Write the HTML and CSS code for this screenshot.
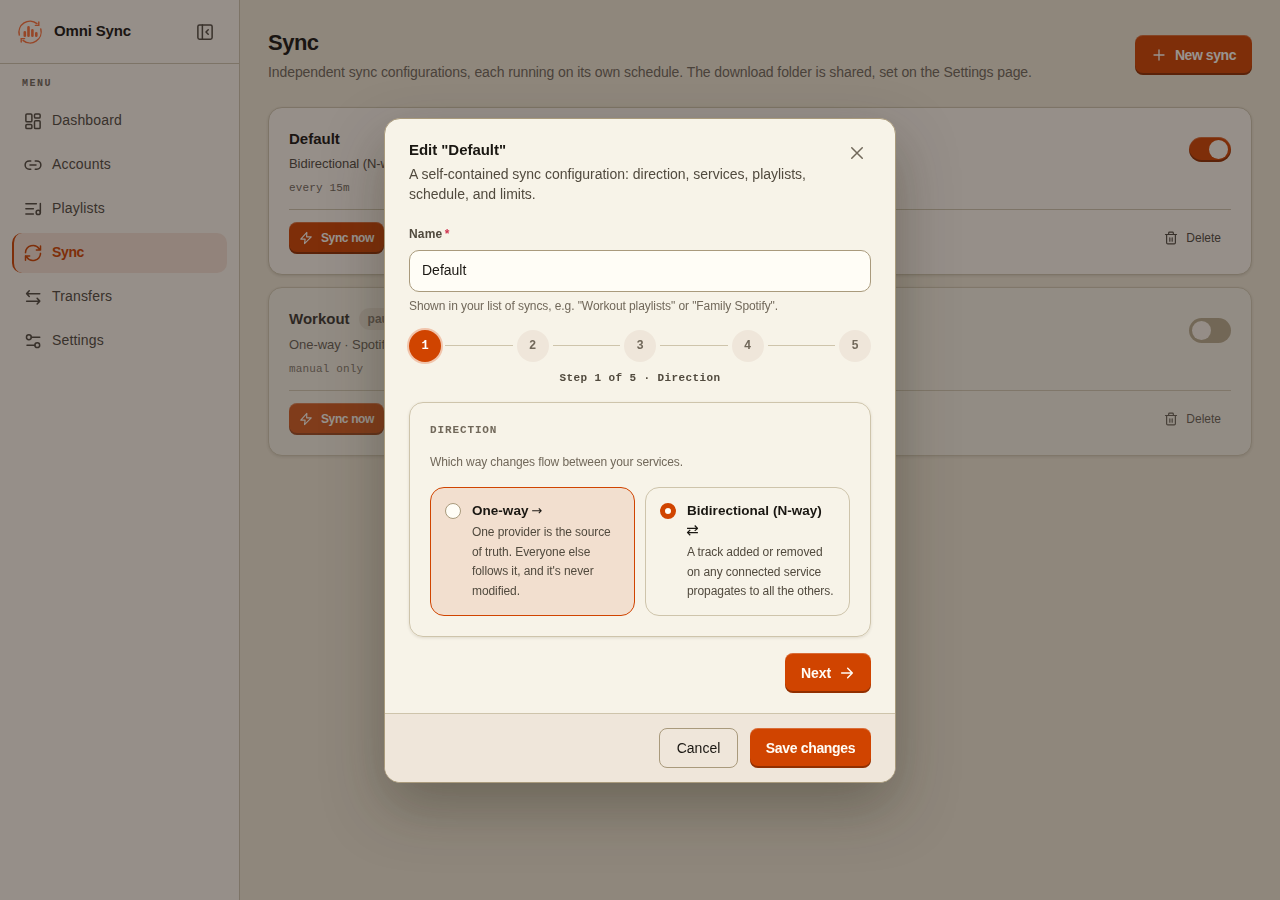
FILE: index.html
```
<!DOCTYPE html>
<html lang="en">
<head>
  <meta charset="UTF-8">
  <meta name="viewport" content="width=device-width, initial-scale=1.0">
  <title>Omni Sync</title>
  <link rel="stylesheet" href="styles.css">
</head>
<body>
  <div class="app">
    <aside class="sidebar">
      <div class="brand">
        <svg class="logo" viewBox="0 0 24 24">
          <path class="ring" d="M1.3 15A11.100 11.100 0 0 1 19 3.600M20.800 2v3.400h-3.400M22.800 9A11.100 11.100 0 0 1 5 20.400M3.200 22v-3.400h3.400"/>
          <path class="bars" d="M6.800 12.200v3.600M10.500 7.400v8.400M14.400 10.300v5.500M18.300 13.300v2.500"/>
        </svg>
        <span class="brand-name">Omni Sync</span>
        <svg class="icon collapse" viewBox="0 0 24 24"><rect x="2.500" y="2.500" width="19" height="19" rx="2.200"/><path d="M8.500 2.500v19M16.300 9l-3 3 3 3"/></svg>
      </div>

      <div class="menu-label">MENU</div>
      <nav>
        <a class="nav-item">
          <svg class="icon" viewBox="0 0 24 24"><rect x="2.500" y="2.500" width="8" height="10.500" rx="1.500"/><rect x="14" y="2.500" width="7.500" height="5.500" rx="1.500"/><rect x="2.500" y="16.500" width="8" height="5.500" rx="1.500"/><rect x="14" y="11.500" width="7.500" height="10.500" rx="1.500"/></svg>
          <span>Dashboard</span>
        </a>
        <a class="nav-item">
          <svg class="icon" viewBox="0 0 24 24"><path d="M9 17.500H7a5.500 5.500 0 0 1 0-11h2M15 6.500h2a5.500 5.500 0 0 1 0 11h-2M8 12h8"/></svg>
          <span>Accounts</span>
        </a>
        <a class="nav-item">
          <svg class="icon" viewBox="0 0 24 24"><path d="M2.500 5h14M2.500 11.800h10M2.500 18.500h10M21.800 4.500v12"/><circle cx="19" cy="16.500" r="2.800"/></svg>
          <span>Playlists</span>
        </a>
        <a class="nav-item active">
          <svg class="icon" viewBox="0 0 24 24"><path d="M2 11.500A10 10 0 0 1 20.300 6.500L22 8M22 2.500V8h-5.500M22 12.500A10 10 0 0 1 3.700 17.500L2 16M2 21.500V16h5.500"/></svg>
          <span>Sync</span>
        </a>
        <a class="nav-item">
          <svg class="icon" viewBox="0 0 24 24"><path d="M21 7.500H3.500M7 3.800L3.500 7.500 7 11.200M3.500 17.500H21M17.500 13.800l3.500 3.700-3.500 3.700"/></svg>
          <span>Transfers</span>
        </a>
        <a class="nav-item">
          <svg class="icon" viewBox="0 0 24 24"><circle cx="6.500" cy="7" r="3.200"/><path d="M9.700 7h11.300M4 17.500h10.500"/><circle cx="17.700" cy="17.500" r="3.200"/></svg>
          <span>Settings</span>
        </a>
      </nav>
    </aside>

    <main class="main">
      <header class="page-header">
        <div>
          <h1>Sync</h1>
          <p class="subtitle">Independent sync configurations, each running on its own schedule. The download folder is shared, set on the Settings page.</p>
        </div>
        <button class="btn btn-primary btn-new">
          <svg class="icon" viewBox="0 0 24 24"><path d="M12 4.500v15M4.500 12h15"/></svg>
          New sync
        </button>
      </header>

      <section class="sync-card">
        <div class="sync-top">
          <div>
            <div class="sync-title"><h2>Default</h2></div>
            <p class="sync-desc">Bidirectional (N-way)</p>
            <p class="sync-schedule">every 15m</p>
          </div>
          <span class="toggle on"></span>
        </div>
        <div class="sync-actions">
          <button class="btn btn-primary btn-small">
            <svg class="icon" viewBox="0 0 24 24"><path d="M13.500 2.500L3 14h7.500l-1 7.500L21 10h-8z"/></svg>
            Sync now
          </button>
          <button class="btn-delete">
            <svg class="icon" viewBox="0 0 24 24"><path d="M2.500 6h19M8 6V3.500Q8 2 9.500 2h5Q16 2 16 3.500V6M4.500 6v14q0 2 2 2h11q2 0 2-2V6M10 11.500v6M14 11.500v6"/></svg>
            Delete
          </button>
        </div>
      </section>

      <section class="sync-card paused">
        <div class="sync-top">
          <div>
            <div class="sync-title"><h2>Workout</h2><span class="badge">paused</span></div>
            <p class="sync-desc">One-way · Spotify</p>
            <p class="sync-schedule">manual only</p>
          </div>
          <span class="toggle"></span>
        </div>
        <div class="sync-actions">
          <button class="btn btn-primary btn-small">
            <svg class="icon" viewBox="0 0 24 24"><path d="M13.500 2.500L3 14h7.500l-1 7.500L21 10h-8z"/></svg>
            Sync now
          </button>
          <button class="btn-delete">
            <svg class="icon" viewBox="0 0 24 24"><path d="M2.500 6h19M8 6V3.500Q8 2 9.500 2h5Q16 2 16 3.500V6M4.500 6v14q0 2 2 2h11q2 0 2-2V6M10 11.500v6M14 11.500v6"/></svg>
            Delete
          </button>
        </div>
      </section>
    </main>
  </div>

  <div class="overlay">
    <div class="modal">
      <div class="modal-body">
        <div class="modal-header">
          <div>
            <h3>Edit "Default"</h3>
            <p>A self-contained sync configuration: direction, services, playlists, schedule, and limits.</p>
          </div>
          <svg class="icon close" viewBox="0 0 24 24"><path d="M5 5l14 14M19 5L5 19"/></svg>
        </div>

        <label class="field-label" for="name">Name <span class="required">*</span></label>
        <input class="field" id="name" type="text" value="Default">
        <p class="help">Shown in your list of syncs, e.g. "Workout playlists" or "Family Spotify".</p>

        <div class="steps">
          <span class="step current">1</span><span class="line"></span>
          <span class="step">2</span><span class="line"></span>
          <span class="step">3</span><span class="line"></span>
          <span class="step">4</span><span class="line"></span>
          <span class="step">5</span>
        </div>
        <p class="step-label">Step 1 of 5 · Direction</p>

        <div class="panel">
          <h4>DIRECTION</h4>
          <p class="panel-text">Which way changes flow between your services.</p>
          <div class="options">
            <div class="option selected">
              <span class="radio"></span>
              <div>
                <div class="option-title">One-way <span class="arrow">→</span></div>
                <p>One provider is the source of truth. Everyone else follows it, and it's never modified.</p>
              </div>
            </div>
            <div class="option">
              <span class="radio checked"></span>
              <div>
                <div class="option-title">Bidirectional (N-way) <span class="arrow both">⇄</span></div>
                <p>A track added or removed on any connected service propagates to all the others.</p>
              </div>
            </div>
          </div>
        </div>

        <div class="wizard-nav">
          <button class="btn btn-primary btn-next">
            Next
            <svg class="icon" viewBox="0 0 24 24"><path d="M4 12h16M13 5l7 7-7 7"/></svg>
          </button>
        </div>
      </div>

      <div class="modal-footer">
        <button class="btn btn-cancel">Cancel</button>
        <button class="btn btn-primary btn-save">Save changes</button>
      </div>
    </div>
  </div>
</body>
</html>
```
FILE: styles.css
```
* {
  box-sizing: border-box;
}

:root {
  --ink: #1a1712;
  --text: #514a3e;
  --muted: #71685a;
  --line: #cec4ab;
  --line-strong: #a99a7c;
  --paper: #f7f3e8;
  --sand: #efe6da;
  --accent: #d04400;
  --mono: "Liberation Mono", monospace;
}

body {
  margin: 0;
  height: 900px;
  overflow: hidden;
  background: #efe6d2;
  color: var(--ink);
  font: 14px/20px "Liberation Sans", Arial, sans-serif;
}

h1, h2, h3, h4, p {
  margin: 0;
}

button {
  font: inherit;
  border: 0;
  background: none;
}

.icon {
  width: 18px;
  height: 18px;
  flex: none;
  fill: none;
  stroke: currentColor;
  stroke-width: 2;
  stroke-linecap: round;
  stroke-linejoin: round;
}

.app {
  display: flex;
  height: 900px;
}

/* sidebar */
.sidebar {
  width: 240px;
  flex: none;
  background: #fcf4ea;
  border-right: 1px solid var(--line);
}

.brand {
  display: flex;
  align-items: center;
  height: 64px;
  padding: 0 25px 0 18px;
  border-bottom: 1px solid var(--line);
}

.logo {
  width: 24px;
  height: 24px;
  fill: none;
  stroke: #fb7038;
  stroke-linecap: round;
  overflow: visible;
}

.ring {
  stroke-width: 1.4;
}

.bars {
  stroke-width: 2.6;
}

.brand-name {
  margin: 0 0 2px 12px;
  font-size: 15px;
  font-weight: 700;
  letter-spacing: -0.15px;
}

.collapse {
  margin-left: auto;
  color: var(--text);
}

.menu-label {
  padding: 10px 22px 0;
  height: 37px;
  font: 700 10px/20px var(--mono);
  letter-spacing: 1.5px;
  color: var(--muted);
}

nav {
  display: flex;
  flex-direction: column;
  gap: 4px;
  padding: 0 12px;
}

.nav-item {
  display: flex;
  align-items: center;
  gap: 10px;
  height: 40px;
  padding: 0 10px;
  border-left: 2px solid transparent;
  border-radius: 10px;
  color: var(--text);
  letter-spacing: 0.17px;
}

.nav-item span {
  padding-bottom: 2px;
}

.nav-item.active {
  border-left-color: var(--accent);
  background: #f4dfcf;
  color: var(--accent);
  font-weight: 700;
  letter-spacing: -0.36px;
}

/* page */
.main {
  flex: 1;
  padding: 28px;
}

.page-header {
  display: flex;
  justify-content: space-between;
  height: 79px;
}

h1 {
  font-size: 22px;
  line-height: 30px;
  letter-spacing: -0.5px;
}

.subtitle {
  margin-top: 4px;
  letter-spacing: -0.09px;
  color: var(--muted);
}

.btn {
  display: flex;
  align-items: center;
  justify-content: center;
  height: 40px;
  padding: 0 0 1px;
  border-radius: 8px;
  white-space: nowrap;
}

.btn-primary {
  background: var(--accent);
  color: #fffcf5;
  font-weight: 700;
  letter-spacing: -0.33px;
  box-shadow: inset 0 1px 0 rgba(255, 255, 255, 0.22), inset 0 -2px 0 rgba(0, 0, 0, 0.3);
}

.btn-new {
  width: 117px;
  margin-top: 7px;
  gap: 8px;
  letter-spacing: -0.44px;
}

.btn-new .icon {
  width: 16px;
  height: 16px;
}

.sync-card {
  height: 168px;
  margin-bottom: 12px;
  padding: 20px;
  border: 1px solid var(--line);
  border-radius: 14px;
  background: #fcf4ea;
  box-shadow: 0 1px 3px rgba(60, 45, 20, 0.15);
}

.sync-card.paused {
  height: 169px;
  background: #f7f1e3;
  opacity: 0.84;
}

.sync-top {
  display: flex;
  justify-content: space-between;
  height: 82px;
  border-bottom: 1px solid var(--line);
}

.paused .sync-top {
  height: 83px;
}

.sync-title {
  display: flex;
  gap: 9px;
  height: 26px;
}

.paused .sync-title {
  height: 27px;
}

h2 {
  font-size: 15px;
  line-height: 22px;
}

.badge {
  height: 22px;
  padding: 0 9px;
  border-radius: 11px;
  background: #e9dfcf;
  color: var(--muted);
  font-size: 12px;
  font-weight: 700;
  line-height: 22px;
}

.sync-desc {
  font-size: 13px;
  line-height: 19px;
  color: var(--text);
  letter-spacing: -0.05px;
}

.sync-schedule {
  margin-top: 6px;
  font: 11px/18px var(--mono);
  letter-spacing: 0.15px;
  color: var(--muted);
}

.toggle {
  width: 42px;
  height: 25px;
  margin-top: 9px;
  padding: 3px;
  border-radius: 13px;
  background: #b2a281;
}

.toggle::before {
  content: "";
  display: block;
  width: 19px;
  height: 19px;
  border-radius: 50%;
  background: #fcf4ea;
}

.paused .toggle {
  margin-top: 10px;
}

.toggle.on {
  padding-left: 20px;
  background: var(--accent);
  box-shadow: inset 0 1px 0 rgba(255, 255, 255, 0.22), inset 0 -2px 0 rgba(0, 0, 0, 0.3);
}

.sync-actions {
  display: flex;
  justify-content: space-between;
  padding-top: 12px;
}

.btn-small {
  width: 95px;
  height: 32px;
  gap: 8px;
  padding-bottom: 0;
  font-size: 12px;
  letter-spacing: -0.37px;
}

.btn-small .icon,
.btn-delete .icon {
  width: 14px;
  height: 14px;
}

.btn-delete {
  display: flex;
  align-items: center;
  gap: 8px;
  height: 32px;
  padding: 0 10px;
  font-size: 12px;
  color: var(--text);
}

/* modal */
.overlay {
  position: fixed;
  inset: 0;
  display: flex;
  justify-content: center;
  padding-top: 118px;
  background: rgba(27, 20, 20, 0.45);
}

.modal {
  width: 512px;
  height: 665px;
  border: 1px solid var(--line-strong);
  border-radius: 16px;
  background: var(--paper);
  box-shadow: 0 24px 60px rgba(40, 38, 20, 0.35);
  overflow: hidden;
}

.modal-body {
  height: 594px;
  padding: 20px 24px 0;
}

.modal-header {
  display: flex;
  justify-content: space-between;
  height: 84px;
}

.modal-header p {
  width: 405px;
  margin-top: 3px;
  letter-spacing: -0.01px;
  color: var(--text);
}

h3 {
  font-size: 15px;
  line-height: 22px;
  letter-spacing: -0.04px;
}

.close {
  margin: 5px 5px 0 0;
  color: var(--muted);
}

.field-label {
  display: block;
  height: 27px;
  font-size: 12px;
  font-weight: 700;
  line-height: 22px;
  letter-spacing: 0.15px;
  color: var(--text);
}

.required {
  margin-left: -1px;
  color: #cf3350;
}

.field {
  display: block;
  width: 100%;
  height: 42px;
  padding: 0 12px 2px;
  border: 1px solid var(--line-strong);
  border-radius: 10px;
  background: #fffdf6;
  color: var(--ink);
  font: inherit;
}

.help {
  margin-top: 4px;
  font-size: 12px;
  letter-spacing: -0.08px;
  color: var(--muted);
}

.steps {
  display: flex;
  align-items: center;
  gap: 4px;
  margin-top: 14px;
}

.step {
  width: 32px;
  height: 32px;
  flex: none;
  border-radius: 50%;
  background: var(--sand);
  color: var(--muted);
  font: 700 12px/32px var(--mono);
  text-align: center;
}

.step.current {
  background: var(--accent);
  color: #fff;
  box-shadow: 0 0 0 2px #f1c4ab;
}

.line {
  flex: 1;
  height: 1px;
  margin-top: -1px;
  background: var(--line);
}

.step-label {
  margin-top: 6px;
  font: 700 11px/20px var(--mono);
  letter-spacing: 0.4px;
  text-align: center;
  color: var(--text);
}

.panel {
  height: 235px;
  margin-top: 14px;
  padding: 17px 20px 0;
  border: 1px solid var(--line);
  border-radius: 14px;
  box-shadow: 0 1px 3px rgba(60, 45, 20, 0.12);
}

h4 {
  font: 700 11px/20px var(--mono);
  letter-spacing: 0.88px;
  color: var(--muted);
}

.panel-text {
  margin-top: 12px;
  font-size: 12px;
  letter-spacing: -0.1px;
  color: var(--muted);
}

.options {
  display: grid;
  grid-template-columns: 1fr 1fr;
  gap: 10px;
  margin-top: 15px;
}

.option {
  display: flex;
  gap: 11px;
  height: 129px;
  padding: 13px 14px 0;
  border: 1px solid var(--line);
  border-radius: 14px;
}

.option.selected {
  border-color: var(--accent);
  background: #f2dfcf;
}

.radio {
  width: 16px;
  height: 16px;
  flex: none;
  margin-top: 2px;
  border: 1px solid var(--line-strong);
  border-radius: 50%;
  background: #fffdf6;
}

.radio.checked {
  border: 5px solid var(--accent);
}

.option-title {
  font-size: 13.5px;
  font-weight: 700;
  letter-spacing: 0.03px;
  margin-bottom: 2px;
}

.arrow {
  margin-left: -1px;
  font: 400 13px/1 "DejaVu Sans", sans-serif;
}

.arrow.both {
  font-size: 15px;
}

.option p {
  width: 147px;
  font-size: 12px;
  line-height: 19.5px;
  letter-spacing: -0.08px;
  color: var(--text);
}

.wizard-nav {
  display: flex;
  justify-content: flex-end;
  margin-top: 16px;
}

.btn-next {
  width: 86px;
  gap: 8px;
  letter-spacing: -0.08px;
}

.btn-next .icon {
  width: 16px;
  height: 16px;
  stroke-width: 2.2;
}

.modal-footer {
  display: flex;
  justify-content: flex-end;
  gap: 12px;
  height: 69px;
  padding: 14px 24px 0;
  border-top: 1px solid var(--line);
  background: var(--sand);
}

.btn-cancel {
  width: 79px;
  border: 1px solid var(--line-strong);
  color: var(--ink);
}

.btn-save {
  width: 121px;
}
```
